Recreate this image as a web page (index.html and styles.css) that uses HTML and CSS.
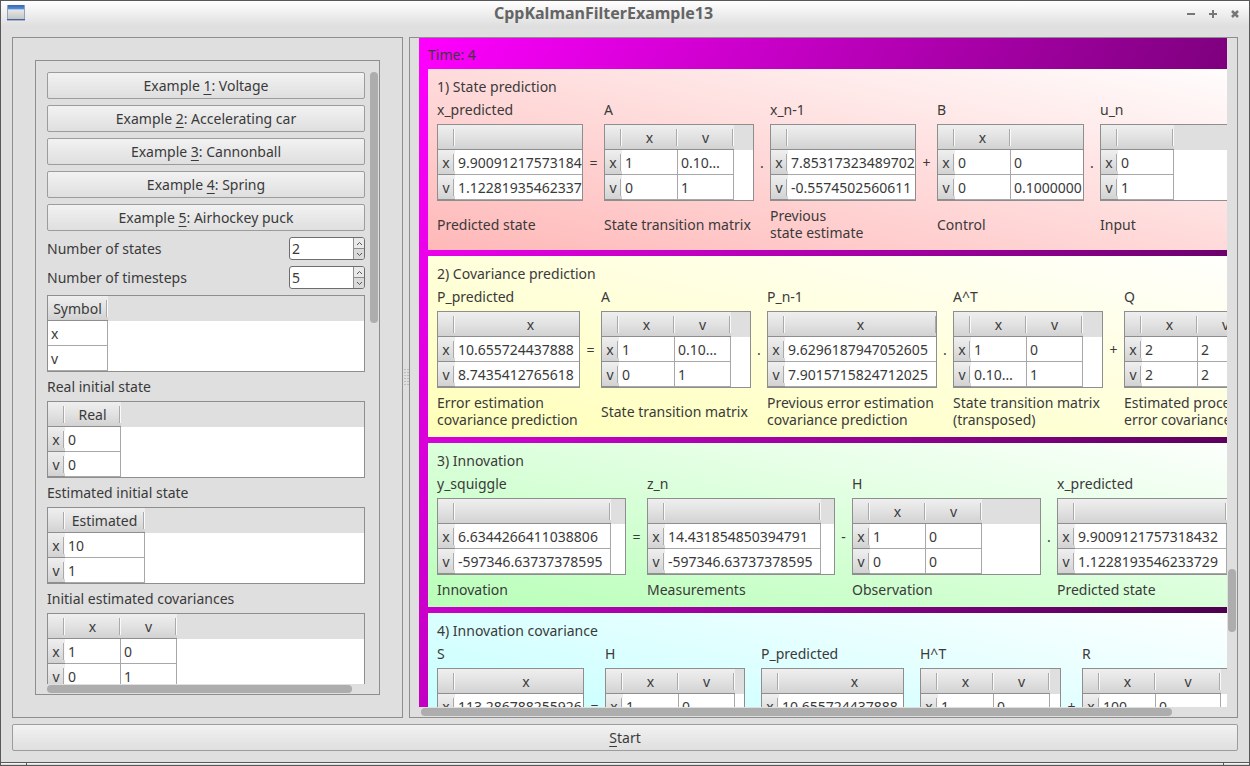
FILE: index.html
```html
<!DOCTYPE html>
<html lang="en">
<head>
<meta charset="utf-8">
<title>CppKalmanFilterExample13</title>
<link rel="stylesheet" href="styles.css">
</head>
<body>
<div class="window">
  <header class="titlebar">
    <svg class="app-icon" width="18" height="17" viewBox="0 0 18 17" aria-hidden="true">
      <defs>
        <linearGradient id="bar" x1="0" y1="0" x2="0" y2="1"><stop offset="0" stop-color="#3468ae"/><stop offset="1" stop-color="#5a8fd4"/></linearGradient>
        <linearGradient id="pane" x1="0" y1="0" x2="0" y2="1"><stop offset="0" stop-color="#e6e6e6"/><stop offset="1" stop-color="#c6c6c6"/></linearGradient>
      </defs>
      <rect x="0" y="0" width="18" height="16" fill="#8fa3bd"/>
      <rect x="1" y="0" width="16" height="4" fill="url(#bar)"/>
      <rect x="1" y="4" width="16" height="1" fill="#a9c6ec"/>
      <rect x="1" y="5" width="16" height="9" fill="url(#pane)"/>
      <rect x="0" y="14" width="18" height="1" fill="#3f66a0"/>
      <rect x="0" y="15" width="18" height="1" fill="#a8b4c6"/>
    </svg>
    <h1 class="title">CppKalmanFilterExample13</h1>
    <div class="window-buttons">
      <button class="window-button" aria-label="Minimize"><svg width="10" height="10" viewBox="0 0 10 10"><path d="M1 5h8" stroke="#777" stroke-width="2"/></svg></button>
      <button class="window-button" aria-label="Maximize"><svg width="10" height="10" viewBox="0 0 10 10"><path d="M1 5h8M5 1v8" stroke="#777" stroke-width="2"/></svg></button>
      <button class="window-button" aria-label="Close"><svg width="10" height="10" viewBox="0 0 10 10"><path d="M2 2l6 6M8 2l-6 6" stroke="#777" stroke-width="2.500"/></svg></button>
    </div>
  </header>

  <main class="splitter">
    <section class="pane parameters">
      <div class="scroll-frame">
        <div class="viewport form">
          <button class="push">Example <u>1</u>: Voltage</button>
          <button class="push">Example <u>2</u>: Accelerating car</button>
          <button class="push">Example <u>3</u>: Cannonball</button>
          <button class="push">Example <u>4</u>: Spring</button>
          <button class="push">Example <u>5</u>: Airhockey puck</button>
          <div class="field">
            <label for="states">Number of states</label>
            <span class="spin"><input id="states" type="number" value="2"><span class="steps"><button class="step" aria-label="More states"><svg width="7" height="5" viewBox="0 0 7 5"><path d="M1 4l2.500-2.500L6 4" fill="none" stroke="#555"/></svg></button><button class="step down" aria-label="Fewer states"><svg width="7" height="5" viewBox="0 0 7 5"><path d="M1 1l2.500 2.500L6 1" fill="none" stroke="#555"/></svg></button></span></span>
          </div>
          <div class="field">
            <label for="timesteps">Number of timesteps</label>
            <span class="spin"><input id="timesteps" type="number" value="5"><span class="steps"><button class="step" aria-label="More timesteps"><svg width="7" height="5" viewBox="0 0 7 5"><path d="M1 4l2.500-2.500L6 4" fill="none" stroke="#555"/></svg></button><button class="step down" aria-label="Fewer timesteps"><svg width="7" height="5" viewBox="0 0 7 5"><path d="M1 1l2.500 2.500L6 1" fill="none" stroke="#555"/></svg></button></span></span>
          </div>
          <div class="view"><table aria-label="Symbols">
            <colgroup><col class="symbol"></colgroup>
            <tr><th>Symbol</th></tr>
            <tr><td>x</td></tr>
            <tr><td>v</td></tr>
          </table></div>
          <p class="label">Real initial state</p>
          <div class="view"><table aria-label="Real initial state">
            <colgroup><col class="head"><col class="short"></colgroup>
            <tr><th></th><th>Real</th></tr>
            <tr><th>x</th><td>0</td></tr>
            <tr><th>v</th><td>0</td></tr>
          </table></div>
          <p class="label">Estimated initial state</p>
          <div class="view"><table aria-label="Estimated initial state">
            <colgroup><col class="head"><col class="estimated"></colgroup>
            <tr><th></th><th>Estimated</th></tr>
            <tr><th>x</th><td>10</td></tr>
            <tr><th>v</th><td>1</td></tr>
          </table></div>
          <p class="label">Initial estimated covariances</p>
          <div class="view"><table aria-label="Initial estimated covariances">
            <colgroup><col class="head"><col class="short"><col class="short"></colgroup>
            <tr><th></th><th>x</th><th>v</th></tr>
            <tr><th>x</th><td>1</td><td>0</td></tr>
            <tr><th>v</th><td>0</td><td>1</td></tr>
          </table></div>
        </div>
        <div class="track-v"><div class="thumb parameters-v"></div></div>
        <div class="track-h"><div class="thumb parameters-h"></div></div>
      </div>
    </section>

    <div class="handle" role="separator">
      <svg width="5" height="17" viewBox="0 0 5 17" aria-hidden="true"><path d="M1 0v17M4 0v17" stroke="#9a9a9a" stroke-dasharray="1 2" stroke-width="1"/></svg>
    </div>

    <section class="pane results">
      <div class="viewport timeline">
        <div class="canvas">
          <p class="label">Time: 4</p>

          <article class="step-panel red">
            <h2 class="label">1) State prediction</h2>
            <div class="equation">
              <div class="term w146"><p class="label">x_predicted</p>
                <div class="view"><table><colgroup><col class="head"><col class="number"></colgroup>
                  <tr><th></th><th></th></tr>
                  <tr><th>x</th><td>9.90091217573184</td></tr>
                  <tr><th>v</th><td>1.12281935462337</td></tr></table></div>
                <p class="caption">Predicted state</p></div>
              <span class="op">=</span>
              <div class="term w150"><p class="label">A</p>
                <div class="view"><table><colgroup><col class="head"><col class="short"><col class="short"></colgroup>
                  <tr><th></th><th>x</th><th>v</th></tr>
                  <tr><th>x</th><td>1</td><td>0.10…</td></tr>
                  <tr><th>v</th><td>0</td><td>1</td></tr></table></div>
                <p class="caption">State transition matrix</p></div>
              <span class="op dot">.</span>
              <div class="term w146"><p class="label">x_n-1</p>
                <div class="view"><table><colgroup><col class="head"><col class="number"></colgroup>
                  <tr><th></th><th></th></tr>
                  <tr><th>x</th><td>7.85317323489702</td></tr>
                  <tr><th>v</th><td>-0.5574502560611</td></tr></table></div>
                <p class="caption">Previous<br>state estimate</p></div>
              <span class="op">+</span>
              <div class="term w147"><p class="label">B</p>
                <div class="view"><table><colgroup><col class="head"><col class="short"><col class="number"></colgroup>
                  <tr><th></th><th>x</th><th></th></tr>
                  <tr><th>x</th><td>0</td><td>0</td></tr>
                  <tr><th>v</th><td>0</td><td>0.1000000</td></tr></table></div>
                <p class="caption">Control</p></div>
              <span class="op dot">.</span>
              <div class="term last"><p class="label">u_n</p>
                <div class="view"><table><colgroup><col class="head"><col class="short"></colgroup>
                  <tr><th></th><th></th></tr>
                  <tr><th>x</th><td>0</td></tr>
                  <tr><th>v</th><td>1</td></tr></table></div>
                <p class="caption">Input</p></div>
            </div>
          </article>

          <article class="step-panel yellow">
            <h2 class="label">2) Covariance prediction</h2>
            <div class="equation">
              <div class="term w143"><p class="label">P_predicted</p>
                <div class="view"><table><colgroup><col class="head"><col class="number"></colgroup>
                  <tr><th></th><th>x</th></tr>
                  <tr><th>x</th><td>10.655724437888</td></tr>
                  <tr><th>v</th><td>8.7435412765618</td></tr></table></div>
                <p class="caption">Error estimation<br>covariance prediction</p></div>
              <span class="op">=</span>
              <div class="term w150"><p class="label">A</p>
                <div class="view"><table><colgroup><col class="head"><col class="short"><col class="short"></colgroup>
                  <tr><th></th><th>x</th><th>v</th></tr>
                  <tr><th>x</th><td>1</td><td>0.10…</td></tr>
                  <tr><th>v</th><td>0</td><td>1</td></tr></table></div>
                <p class="caption">State transition matrix</p></div>
              <span class="op dot">.</span>
              <div class="term w170"><p class="label">P_n-1</p>
                <div class="view"><table><colgroup><col class="head"><col class="number"></colgroup>
                  <tr><th></th><th>x</th></tr>
                  <tr><th>x</th><td>9.6296187947052605</td></tr>
                  <tr><th>v</th><td>7.9015715824712025</td></tr></table></div>
                <p class="caption">Previous error estimation<br>covariance prediction</p></div>
              <span class="op dot">.</span>
              <div class="term w150"><p class="label">A^T</p>
                <div class="view"><table><colgroup><col class="head"><col class="short"><col class="short"></colgroup>
                  <tr><th></th><th>x</th><th>v</th></tr>
                  <tr><th>x</th><td>1</td><td>0</td></tr>
                  <tr><th>v</th><td>0.10…</td><td>1</td></tr></table></div>
                <p class="caption">State transition matrix<br>(transposed)</p></div>
              <span class="op">+</span>
              <div class="term last"><p class="label">Q</p>
                <div class="view"><table><colgroup><col class="head"><col class="short"><col class="short"></colgroup>
                  <tr><th></th><th>x</th><th>v</th></tr>
                  <tr><th>x</th><td>2</td><td>2</td></tr>
                  <tr><th>v</th><td>2</td><td>2</td></tr></table></div>
                <p class="caption">Estimated process<br>error covariance</p></div>
            </div>
          </article>

          <article class="step-panel green">
            <h2 class="label">3) Innovation</h2>
            <div class="equation">
              <div class="term w189"><p class="label">y_squiggle</p>
                <div class="view"><table><colgroup><col class="head"><col class="long"></colgroup>
                  <tr><th></th><th></th></tr>
                  <tr><th>x</th><td>6.6344266411038806</td></tr>
                  <tr><th>v</th><td>-597346.63737378595</td></tr></table></div>
                <p class="caption">Innovation</p></div>
              <span class="op">=</span>
              <div class="term w188"><p class="label">z_n</p>
                <div class="view"><table><colgroup><col class="head"><col class="long"></colgroup>
                  <tr><th></th><th></th></tr>
                  <tr><th>x</th><td>14.431854850394791</td></tr>
                  <tr><th>v</th><td>-597346.63737378595</td></tr></table></div>
                <p class="caption">Measurements</p></div>
              <span class="op dash">-</span>
              <div class="term w189"><p class="label">H</p>
                <div class="view"><table><colgroup><col class="head"><col class="short"><col class="short"></colgroup>
                  <tr><th></th><th>x</th><th>v</th></tr>
                  <tr><th>x</th><td>1</td><td>0</td></tr>
                  <tr><th>v</th><td>0</td><td>0</td></tr></table></div>
                <p class="caption">Observation</p></div>
              <span class="op dot">.</span>
              <div class="term last"><p class="label">x_predicted</p>
                <div class="view"><table><colgroup><col class="head"><col class="number"></colgroup>
                  <tr><th></th><th></th></tr>
                  <tr><th>x</th><td>9.9009121757318432</td></tr>
                  <tr><th>v</th><td>1.1228193546233729</td></tr></table></div>
                <p class="caption">Predicted state</p></div>
            </div>
          </article>

          <article class="step-panel cyan">
            <h2 class="label">4) Innovation covariance</h2>
            <div class="equation">
              <div class="term w147"><p class="label">S</p>
                <div class="view"><table><colgroup><col class="head"><col class="medium"></colgroup>
                  <tr><th></th><th>x</th></tr>
                  <tr><th>x</th><td>113.286788255926</td></tr></table></div></div>
              <span class="op">=</span>
              <div class="term w140"><p class="label">H</p>
                <div class="view"><table><colgroup><col class="head"><col class="short"><col class="short"></colgroup>
                  <tr><th></th><th>x</th><th>v</th></tr>
                  <tr><th>x</th><td>1</td><td>0</td></tr></table></div></div>
              <span class="op dot">.</span>
              <div class="term w143"><p class="label">P_predicted</p>
                <div class="view"><table><colgroup><col class="head"><col class="number"></colgroup>
                  <tr><th></th><th>x</th></tr>
                  <tr><th>x</th><td>10.655724437888</td></tr></table></div></div>
              <span class="op dot">.</span>
              <div class="term w141"><p class="label">H^T</p>
                <div class="view"><table><colgroup><col class="head"><col class="short"><col class="short"></colgroup>
                  <tr><th></th><th>x</th><th>v</th></tr>
                  <tr><th>x</th><td>1</td><td>0</td></tr></table></div></div>
              <span class="op">+</span>
              <div class="term last"><p class="label">R</p>
                <div class="view"><table><colgroup><col class="head"><col class="short"><col class="noise"></colgroup>
                  <tr><th></th><th>x</th><th>v</th></tr>
                  <tr><th>x</th><td>100</td><td>0</td></tr></table></div></div>
            </div>
          </article>
        </div>
      </div>
      <div class="track-v"><div class="thumb results-v"></div></div>
      <div class="track-h"><div class="thumb results-h"></div></div>
    </section>
  </main>

  <button class="push start"><u>S</u>tart</button>
  <div class="sizegrip"></div>
</div>
</body>
</html>
```
FILE: styles.css
```css
* { box-sizing: border-box; }

body {
  margin: 0;
  background: #dfdfdf;
  color: #3a3a3a;
  font: 14px/17px "Noto Sans", sans-serif;
}

p, h1, h2 { margin: 0; font-size: inherit; font-weight: inherit; }

button, input { font: inherit; color: inherit; }

u { text-decoration-thickness: 1px; text-underline-offset: 3px; }

.window {
  display: flex;
  flex-direction: column;
  height: 100vh;
  border: 1px solid #5a5758;
  overflow: hidden;
}

/* Title bar */
.titlebar {
  display: grid;
  grid-template-columns: 1fr auto 1fr;
  align-items: center;
  flex: none;
  height: 25px;
  padding: 0 9px 0 6px;
  background: linear-gradient(#fff, #dfdfdf);
}

.title { margin-right: 40px; font-weight: 700; font-size: 16px; color: #646464; }

.window-buttons { display: flex; justify-content: flex-end; gap: 12px; }

.window-button {
  display: flex;
  padding: 0;
  border: 0;
  background: none;
}

/* Panes */
.splitter {
  display: flex;
  flex: 1;
  min-height: 0;
  margin: 11px 11px 6px;
}

.pane { border: 1px solid #8e8e8e; min-width: 0; }

.parameters { flex: none; width: 391px; padding: 22px; }

.scroll-frame,
.results {
  display: grid;
  grid-template-rows: minmax(0, 1fr) 8px;
  row-gap: 1px;
}

.scroll-frame {
  grid-template-columns: minmax(0, 1fr) 8px;
  column-gap: 5px;
  height: 100%;
  padding: 11px 1px 1px 11px;
  border: 1px solid #8e8e8e;
}

.results {
  flex: 1;
  grid-template-columns: minmax(0, 1fr) 8px;
  column-gap: 1px;
  padding: 0 1px 1px 9px;
}

.viewport { overflow: hidden; }

.handle {
  display: flex;
  flex: none;
  align-items: center;
  justify-content: center;
  width: 6px;
}

.track-v, .track-h { overflow: hidden; }

.thumb { border-radius: 4px; background: #adadad; }
.track-h .thumb { height: 8px; }
.parameters-v { height: 41%; }
.parameters-h { width: 96%; }
.results-v { height: 63px; margin-top: 531px; }
.results-h { width: 93%; margin-left: 2px; }

/* Form */
.form { display: flex; flex-direction: column; gap: 6px; }
.form > * { flex: none; }

.push {
  height: 27px;
  padding: 0;
  border: 1px solid #9c9c9c;
  border-radius: 2px;
  background: linear-gradient(#f2f2f2, #dfdfdf);
}

.start { flex: none; margin: 0 11px 11px; }

.field { display: flex; align-items: center; justify-content: space-between; }

.spin {
  display: flex;
  width: 76px;
  height: 23px;
  border: 1px solid #6e6e6e;
  border-radius: 3px;
  background: #fff;
  overflow: hidden;
}

.spin input {
  flex: 1;
  min-width: 0;
  padding: 0 2px;
  border: 0;
  background: none;
  appearance: textfield;
}

.spin input::-webkit-inner-spin-button { display: none; }

.steps {
  display: flex;
  flex-direction: column;
  width: 11px;
  border-left: 1px solid #8e8e8e;
}

.step {
  display: flex;
  flex: 1;
  align-items: center;
  justify-content: center;
  min-height: 0;
  padding: 0;
  border: 0;
  background: #e9e9e9;
}

.down { border-top: 1px solid #8e8e8e; background: #dadada; }

/* Matrix views */
.view {
  height: 77px;
  border: 1px solid #8e8e8e;
  background: linear-gradient(#dfdfdf 25px, #fff 25px);
  overflow: hidden;
}

table { width: 0; table-layout: fixed; border-collapse: separate; border-spacing: 0; }

th, td {
  height: 25px;
  padding: 0 3px;
  overflow: hidden;
  white-space: nowrap;
}

th {
  padding: 0 1px 0 0;
  border-bottom: 1px solid #8e8e8e;
  background:
    linear-gradient(#aaa, #aaa) right 1px top 4px / 1px 17px no-repeat,
    linear-gradient(#fafafa, #fafafa) right top 4px / 1px 17px no-repeat,
    linear-gradient(#efefef, #e2e2e2 50%, #d2d2d2);
  font-weight: normal;
  text-align: center;
}

td {
  border-right: 1px solid #a8a8a8;
  border-bottom: 1px solid #a8a8a8;
  background: #fff;
  text-align: left;
}

.head { width: 17px; }
.short { width: 56px; }
.symbol { width: 60px; }
.noise { width: 65px; }
.estimated { width: 80px; }
.medium { width: 143px; }
.number { width: 152px; }
.long { width: 156px; }

/* Calculation steps */
.timeline { background: linear-gradient(120deg, #f0f, #000 1409px); }

.canvas {
  display: flex;
  flex-direction: column;
  gap: 6px;
  width: calc(100% + 58px);
  padding: 8px 9px;
}

.step-panel {
  display: flex;
  flex-direction: column;
  gap: 6px;
  padding: 9px;
}

.red { background: linear-gradient(to top right, #ffb8b8, #fff); }
.yellow { background: linear-gradient(to top right, #ffffb8, #fff); }
.green { background: linear-gradient(to top right, #b8ffb8, #fff); }
.cyan { min-height: 164px; background: linear-gradient(to top right, #b8ffff, #fff); }

.equation { display: flex; gap: 6px; white-space: nowrap; }

.term { display: flex; flex: none; flex-direction: column; gap: 6px; }
.last { flex: 1; }

.caption { display: flex; flex: 1; align-items: center; }

.op {
  display: flex;
  flex: none;
  align-items: center;
  justify-content: center;
  width: 9px;
  height: 77px;
  margin-top: 23px;
}

.dot { width: 4px; }
.dash { width: 5px; }

.w140 { width: 140px; }
.w141 { width: 141px; }
.w143 { width: 143px; }
.w146 { width: 146px; }
.w147 { width: 147px; }
.w150 { width: 150px; }
.w170 { width: 170px; }
.w188 { width: 188px; }
.w189 { width: 189px; }

/* Bottom resize edge */
.sizegrip {
  flex: none;
  height: 3px;
  border-top: 1px solid #5a5758;
  background:
    linear-gradient(#5a5758, #5a5758) left 25px top / 1px 100% no-repeat,
    linear-gradient(#5a5758, #5a5758) right 25px top / 1px 100% no-repeat,
    linear-gradient(#fff, #cfcfcf);
}
```
